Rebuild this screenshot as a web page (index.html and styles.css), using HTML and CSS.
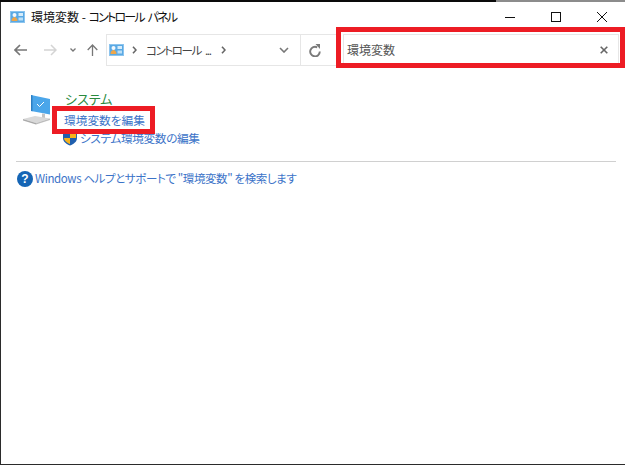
FILE: index.html
```html
<!DOCTYPE html>
<html lang="ja">
<head>
<meta charset="utf-8">
<title>環境変数 - コントロール パネル</title>
<link rel="stylesheet" href="styles.css">
</head>
<body>
<div class="window">
  <div class="edge"><span class="edge-dark"></span><span class="edge-grey"></span></div>
  <header class="titlebar">
    <svg class="cp-icon" viewBox="0 0 15 12"><rect x="0" y="0" width="15" height="12" fill="#8cc4ee"/><rect x="1" y="1" width="13" height="10" fill="#5aa9e4"/><rect x="8.5" y="2" width="4.5" height="3" fill="#d6ecfa"/><rect x="8.5" y="6.5" width="4.5" height="3" fill="#bcdff6"/><circle cx="4.5" cy="4" r="2" fill="#f4f8fb"/><path d="M1.5 10c0-3 2-4 3-4s3 1 3 4z" fill="#eea64a"/></svg>
    <span class="title">環境変数 - <span class="kana">コントロール パネル</span></span>
    <div class="caption">
      <span class="cap-btn"><svg viewBox="0 0 10 10"><path d="M0 5.5h10" stroke="#111" stroke-width="1"/></svg></span>
      <span class="cap-btn"><svg viewBox="0 0 10 10"><rect x=".5" y=".5" width="9" height="9" fill="none" stroke="#111"/></svg></span>
      <span class="cap-btn"><svg viewBox="0 0 10 10"><path d="M0 0l10 10M10 0L0 10" stroke="#111" stroke-width="1"/></svg></span>
    </div>
  </header>
  <div class="toolbar">
    <nav class="nav">
      <svg class="nav-back" viewBox="0 0 13 12"><path d="M6 1L1 6l5 5M1 6h12" fill="none" stroke="#777" stroke-width="1.7"/></svg>
      <svg class="nav-forward" viewBox="0 0 13 12"><path d="M7 1l5 5-5 5M12 6H0" fill="none" stroke="#d4d4d4" stroke-width="1.5"/></svg>
      <svg class="nav-recent" viewBox="0 0 6 4"><path d="M.5.5L3 3 5.5.5" fill="none" stroke="#777" stroke-width="1.3"/></svg>
      <svg class="nav-up" viewBox="0 0 11 12"><path d="M.7 6l4.800-5 4.800 5M5.500 1v11" fill="none" stroke="#777" stroke-width="1.300"/></svg>
    </nav>
    <div class="address">
      <svg class="cp-icon addr-icon" viewBox="0 0 15 12"><rect x="0" y="0" width="15" height="12" fill="#8cc4ee"/><rect x="1" y="1" width="13" height="10" fill="#5aa9e4"/><rect x="8.500" y="2" width="4.500" height="3" fill="#d6ecfa"/><rect x="8.500" y="6.500" width="4.500" height="3" fill="#bcdff6"/><circle cx="4.500" cy="4" r="2" fill="#f4f8fb"/><path d="M1.500 10c0-3 2-4 3-4s3 1 3 4z" fill="#eea64a"/></svg>
      <svg class="crumb-sep" viewBox="0 0 5 8"><path d="M1 .8L4 4 1 7.200" fill="none" stroke="#666" stroke-width="1.600"/></svg>
      <span class="crumb">コントロール ...</span>
      <svg class="crumb-sep" viewBox="0 0 5 8"><path d="M1 .8L4 4 1 7.200" fill="none" stroke="#666" stroke-width="1.600"/></svg>
      <svg class="addr-drop" viewBox="0 0 10 6"><path d="M1 1l4 4 4-4" fill="none" stroke="#777" stroke-width="1.600"/></svg>
      <span class="refresh"><svg viewBox="0 0 12 13"><path d="M8.200 3.300A4.800 4.800 0 1 0 10.800 7.500" fill="none" stroke="#7a7a7a" stroke-width="1.900"/><path d="M6.500 0h4.500v5z" fill="#7a7a7a"/></svg></span>
    </div>
    <div class="search">
      <span class="search-text">環境変数</span>
      <svg class="search-clear" viewBox="0 0 8 8"><path d="M.7.7l6.600 6.600M7.300.7L.7 7.300" stroke="#666" stroke-width="1.600"/></svg>
      <span class="frame frame-search"></span>
    </div>
  </div>
  <main class="content">
    <section class="result">
      <svg class="pc-icon" viewBox="0 0 29 30">
        <path d="M9 0L28 4v15.500L9 16z" fill="#4ba6ea"/>
        <path d="M9 0l1.500.300v15.900L9 16z" fill="#2c7fc4"/>
        <path d="M15 9l2.500 2.500L22 7" fill="none" stroke="#fff" stroke-width="1"/>
        <path d="M20 18.500l3 .500v4.500l-3-.500z" fill="#c4c4c4"/>
        <path d="M1 24l12-3 15 2.500-14 4.500z" fill="#d9d9d9"/>
        <path d="M1 24l13 4v1.500L1 25.500z" fill="#aaa"/>
        <path d="M14 28l14-4.500V25l-14 4.500z" fill="#bdbdbd"/>
      </svg>
      <div class="result-links">
        <h2 class="result-title">システム</h2>
        <a class="link link-framed">環境変数を編集<span class="frame frame-link"></span></a>
        <a class="link link-shield">
          <svg class="shield" viewBox="0 0 15 16"><path d="M7.500 0L15 2v6c0 4-3.500 6.500-7.500 8C3.500 14.500 0 12 0 8V2z" fill="#1f5fae"/><path d="M7.500 1L14 2.700V8H7.500z" fill="#f7b21c"/><path d="M7.500 8H1c.3 3 3 5 6.500 6.800z" fill="#f7b21c"/></svg>
          <span class="link-shield-text">システム環境変数の編集</span>
        </a>
      </div>
    </section>
    <hr class="rule">
    <a class="help">
      <span class="help-icon">?</span>
      <span class="help-text">Windows ヘルプとサポートで "環境変数" を検索します</span>
    </a>
  </main>
</div>
</body>
</html>
```
FILE: styles.css
```css
* { box-sizing: border-box; }
html, body { margin: 0; padding: 0; background: #fff; }
body {
  width: 625px;
  height: 465px;
  overflow: hidden;
  font-family: "Noto Sans CJK JP", "Noto Sans", sans-serif;
  font-size: 12px;
  font-feature-settings: "palt";
}
.window {
  width: 625px;
  height: 465px;
  background: #fff;
  border-left: 1px solid #2b2b2b;
  border-bottom: 1px solid #2b2b2b;
  display: flex;
  flex-direction: column;
}
.edge { display: flex; height: 2px; margin-left: -1px; flex: none; }
.edge-dark { width: 496px; background: #0a0a0a; }
.edge-grey { flex: 1; background: #8c8c8c; }

.titlebar {
  height: 32px;
  flex: none;
  display: flex;
  align-items: center;
  padding: 0 0 3px 9px;
}
.cp-icon { width: 15px; height: 12px; flex: none; }
.title { margin-left: 6px; color: #111; line-height: 16px; }
.kana { letter-spacing: -1.800px; word-spacing: 3px; }
.caption { margin-left: auto; display: flex; }
.cap-btn {
  width: 46px;
  height: 29px;
  display: flex;
  align-items: center;
  justify-content: center;
}
.cap-btn svg { width: 10px; height: 10px; }

.toolbar {
  height: 32px;
  flex: none;
  display: flex;
  padding-right: 6px;
}
.nav {
  width: 105px;
  flex: none;
  display: flex;
  align-items: center;
  padding-left: 13px;
}
.nav-back { width: 13px; height: 12px; }
.nav-forward { width: 13px; height: 12px; margin-left: 17px; }
.nav-recent { width: 6px; height: 4px; margin-left: 13px; }
.nav-up { width: 11px; height: 12px; margin-left: 11px; }

.address {
  width: 230px;
  flex: none;
  border: 1px solid #e6e6e6;
  border-right: 0;
  display: flex;
  align-items: center;
  padding-left: 2px;
}
.addr-icon { margin-right: 8px; }
.crumb-sep { width: 5px; height: 8px; flex: none; }
.crumb {
  margin: 0 10px 0 9px;
  color: #444;
  font-size: 11.500px;
  letter-spacing: -1.400px;
  word-spacing: 3px;
  white-space: nowrap;
  width: 65px;
}
.addr-drop { width: 10px; height: 6px; margin-left: 53px; flex: none; }
.refresh {
  margin-left: 11px;
  width: 35px;
  height: 100%;
  border-left: 1px solid #e6e6e6;
  display: flex;
  align-items: center;
  justify-content: center;
  padding-right: 6px;
  flex: none;
}
.refresh svg { width: 12px; height: 13px; }

.search {
  position: relative;
  margin-left: 7px;
  width: 276px;
  flex: none;
  border: 1px solid #e6e6e6;
  display: flex;
  align-items: center;
  justify-content: space-between;
  padding: 0 10px 1px 3px;
}
.search-text { color: #555; }
.search-clear { width: 8px; height: 8px; }

.frame {
  position: absolute;
  border: 5px solid #ed1c24;
  pointer-events: none;
}
.frame-search { left: -8px; right: -7px; top: -8px; bottom: -3px; }
.frame-link { left: -12px; right: -10px; top: -4px; bottom: -5px; }

.content { flex: 1; padding-top: 23px; }
.result { display: flex; padding-left: 21px; }
.pc-icon { width: 29px; height: 30px; flex: none; margin-top: 6px; }
.result-links { margin-left: 14px; display: flex; flex-direction: column; align-items: flex-start; }
.result-title {
  margin: 0;
  font-weight: 400;
  font-size: 13px;
  line-height: 19px;
  color: #2a8a3e;
}
.link { color: #3b73c8; line-height: 19px; white-space: nowrap; font-size: 11.700px; }
.link-framed { position: relative; margin-top: 2px; margin-left: -1px; }
.link-shield { display: flex; align-items: center; margin-left: -2px; margin-top: -1px; }
.link-shield-text { letter-spacing: -0.400px; }
.shield { width: 14px; height: 16px; margin-right: 3px; flex: none; }

.rule {
  margin: 14px 9px 0 15px;
  border: 0;
  height: 1px;
  background: #d0d0d0;
}
.help {
  margin: 8px 0 0 16px;
  display: flex;
  align-items: center;
  color: #3b73c8;
  line-height: 17px;
}
.help-icon {
  width: 16px;
  height: 16px;
  border-radius: 50%;
  background: #1565b5;
  color: #fff;
  font: 700 12px/16px "Liberation Sans", sans-serif;
  text-align: center;
  flex: none;
}
.help-text { margin-left: 2px; white-space: nowrap; font-size: 11.500px; letter-spacing: -0.400px; }
```
